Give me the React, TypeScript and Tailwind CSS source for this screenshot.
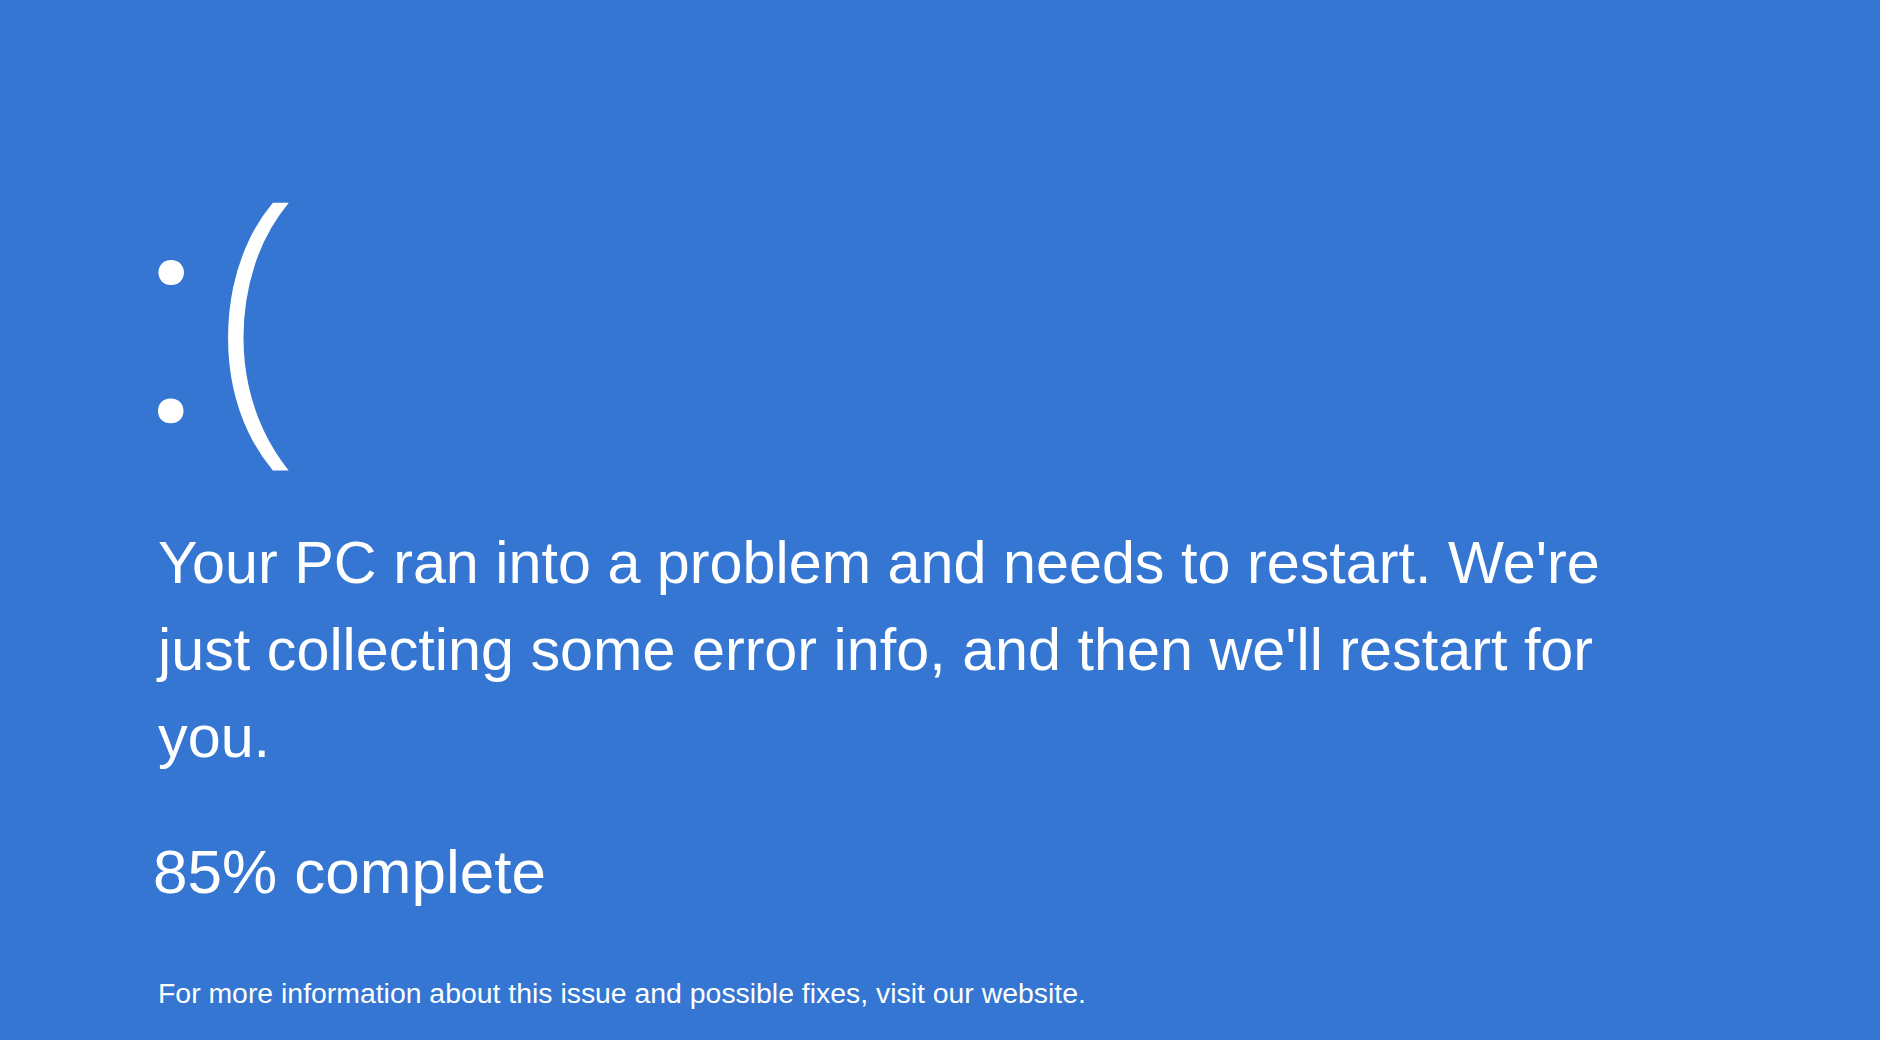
export default function App() {
  return (
    <div className="h-[1040px] w-full overflow-hidden bg-[#3476d2] text-white font-['Liberation_Sans',Arial,sans-serif]">
      <div className="pl-[158px] pt-[150px]">
        <div className="flex items-baseline whitespace-nowrap">
          <span className="-ml-[19px] font-['Roboto',sans-serif] font-light text-[307px] leading-none">:</span>
          <span className="ml-[12px] font-['Open_Sans',sans-serif] font-light text-[307px] leading-none">(</span>
        </div>
        <p className="mt-[48px] w-[1480px] text-[59.3px] leading-[87px]">
          Your PC ran into a problem and needs to restart. We're just collecting some error info, and then we'll restart for you.
        </p>
        <p className="mt-[52px] -ml-[5px] text-[62px] leading-[80px]">85% complete</p>
        <p className="mt-[65px] text-[28.4px] leading-[32px]">
          For more information about this issue and possible fixes, visit our website.
        </p>
      </div>
    </div>
  );
}
